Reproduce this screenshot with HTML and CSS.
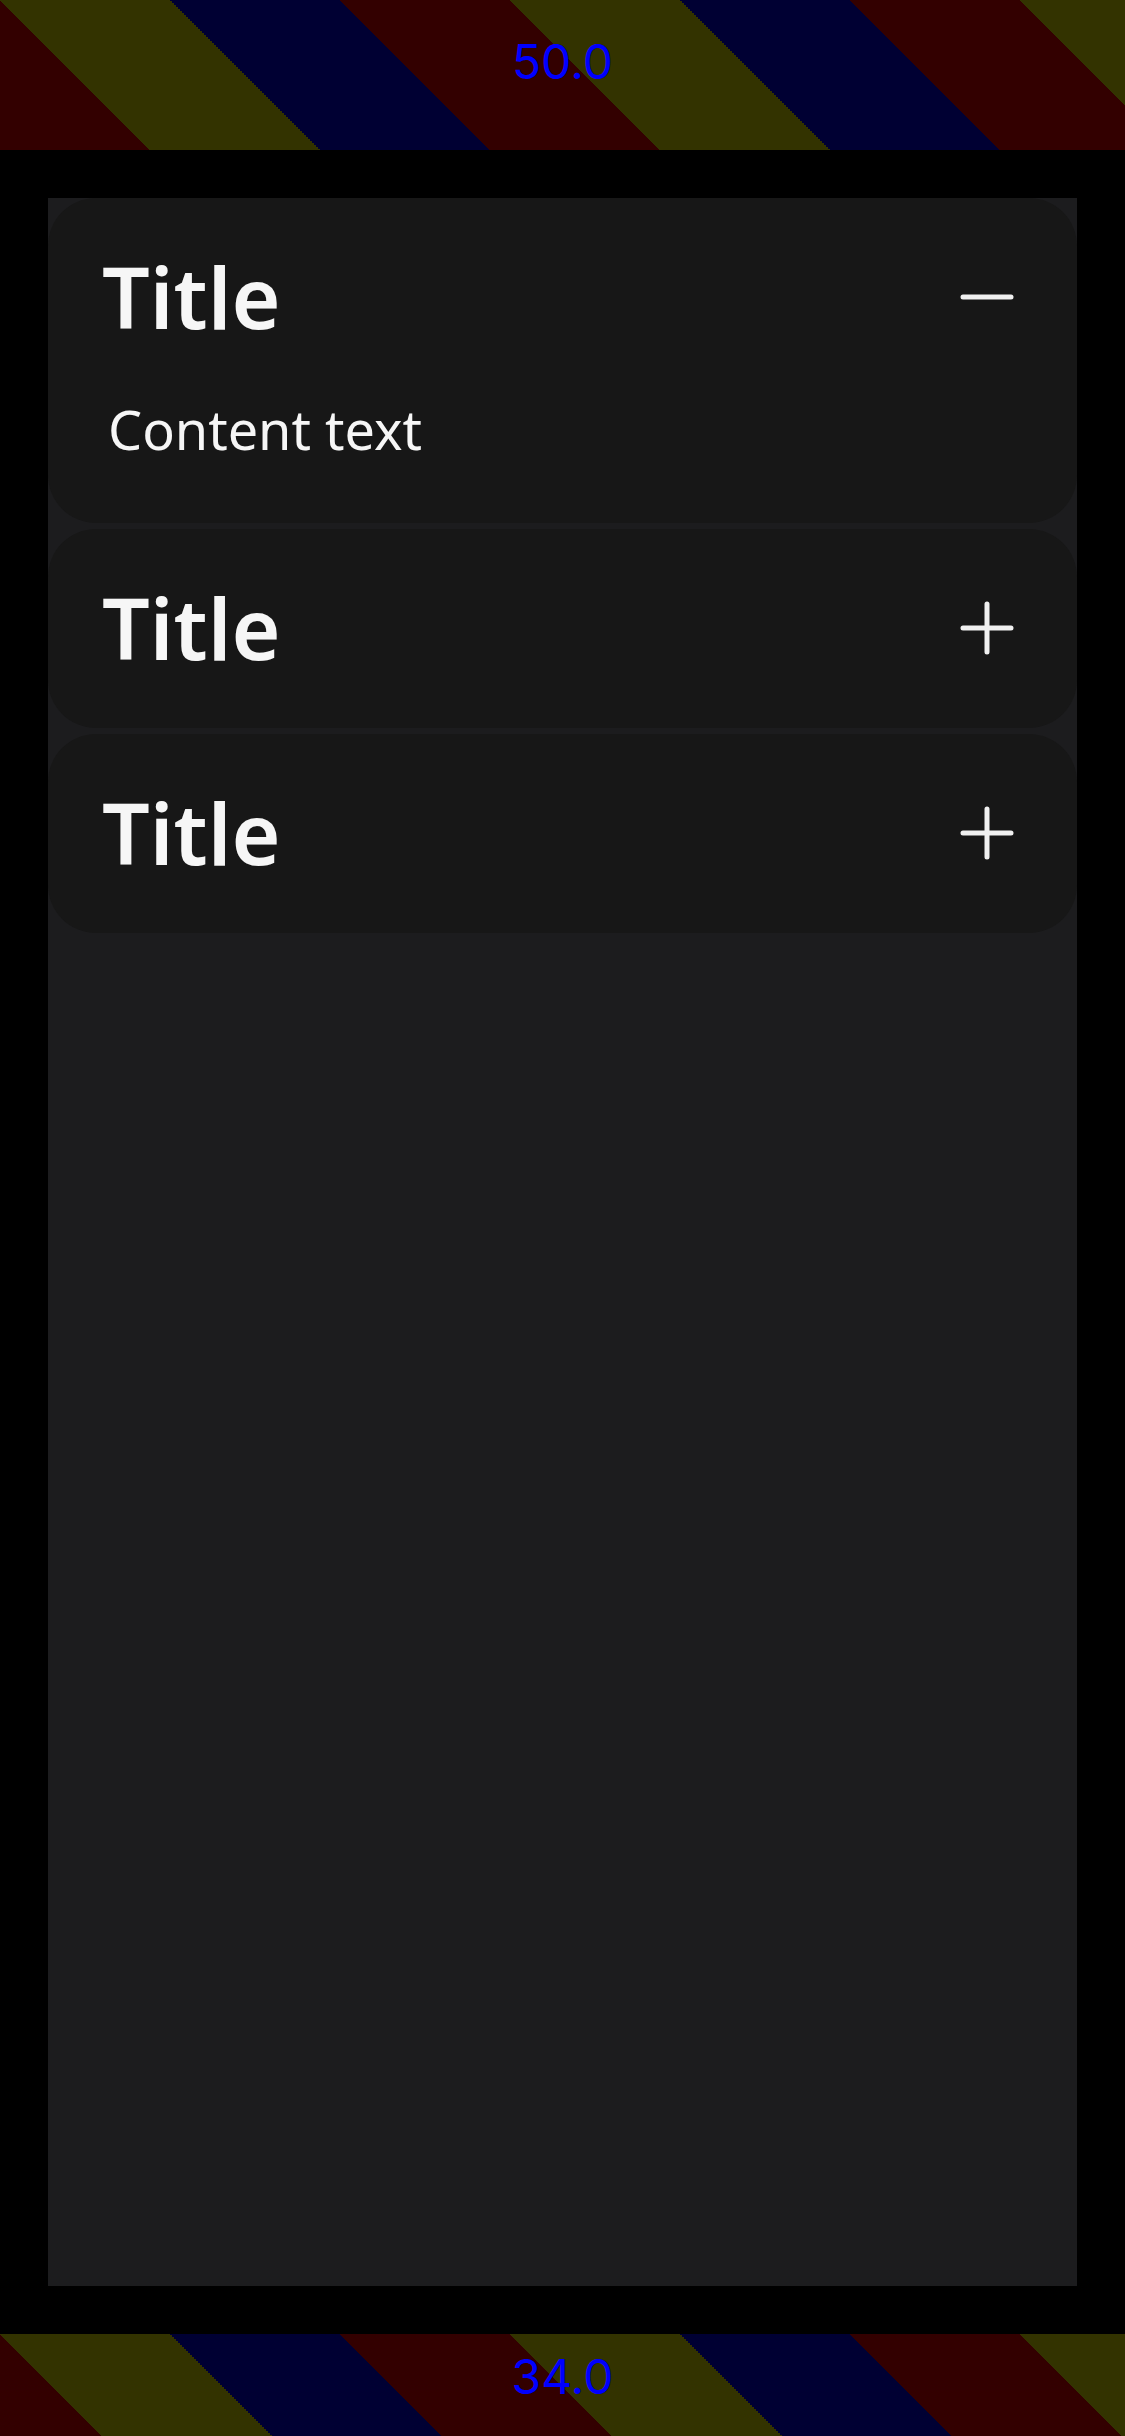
FILE: index.html
```html
<!DOCTYPE html>
<html lang="en">
<head>
<meta charset="utf-8">
<meta name="viewport" content="width=device-width, initial-scale=1">
<title>Accordion</title>
<link rel="stylesheet" href="styles.css">
</head>
<body>
<div class="screen">
  <div class="inset inset-top">50.0</div>
  <main class="stage">
    <div class="panel">
      <section class="card">
        <h2 class="card-heading">
          <button class="card-toggle" type="button" aria-expanded="true" aria-controls="content-1">
            <span>Title</span>
            <svg class="icon" viewBox="0 0 72 72" aria-hidden="true"><path d="M12 36H60"/></svg>
          </button>
        </h2>
        <p class="card-content" id="content-1">Content text</p>
      </section>
      <section class="card">
        <h2 class="card-heading">
          <button class="card-toggle" type="button" aria-expanded="false">
            <span>Title</span>
            <svg class="icon" viewBox="0 0 72 72" aria-hidden="true"><path d="M12 36H60M36 12V60"/></svg>
          </button>
        </h2>
      </section>
      <section class="card">
        <h2 class="card-heading">
          <button class="card-toggle" type="button" aria-expanded="false">
            <span>Title</span>
            <svg class="icon" viewBox="0 0 72 72" aria-hidden="true"><path d="M12 36H60M36 12V60"/></svg>
          </button>
        </h2>
      </section>
    </div>
  </main>
  <div class="inset inset-bottom">34.0</div>
</div>
</body>
</html>
```
FILE: styles.css
```css
* {
  box-sizing: border-box;
}

body {
  margin: 0;
  background: #000;
  color: #f6f6f6;
  font-family: "Noto Sans", sans-serif;
}

.screen {
  display: flex;
  flex-direction: column;
  min-height: 100vh;
}

/* Safe-area bands: diagonal stripes, 170px wide along the horizontal */
.inset {
  display: flex;
  align-items: center;
  justify-content: center;
  background-image: repeating-linear-gradient(
    45deg,
    #330 0 calc(100% / 6),
    #003 0 calc(100% / 3),
    #300 0 50%
  );
  background-size: 510px 510px;
  color: #00f;
  font-family: Inter, sans-serif;
  font-size: 48px;
  line-height: 60px;
}

.inset-top {
  height: 150px;
  padding-bottom: 26px;
}

.inset-bottom {
  height: 102px;
  padding-bottom: 16px;
}

.stage {
  flex: 1;
  display: flex;
  padding: 48px;
}

.panel {
  flex: 1;
  display: flex;
  flex-direction: column;
  gap: 6px;
  background: #1c1c1e;
}

.card {
  background: #171717;
  border-radius: 48px;
}

.card-heading {
  margin: 0;
}

.card-toggle {
  display: flex;
  align-items: center;
  justify-content: space-between;
  width: 100%;
  padding: 49px 54px 50px;
  border: 0;
  background: none;
  color: inherit;
  font: 600 84px/100px "Noto Sans", sans-serif;
  text-align: left;
  cursor: pointer;
}

.icon {
  width: 72px;
  height: 72px;
  fill: none;
  stroke: #f0f0f0;
  stroke-width: 5;
  stroke-linecap: round;
}

.card-content {
  margin: 0;
  padding: 0 60px 62px;
  font-size: 54px;
  line-height: 64px;
}
```
